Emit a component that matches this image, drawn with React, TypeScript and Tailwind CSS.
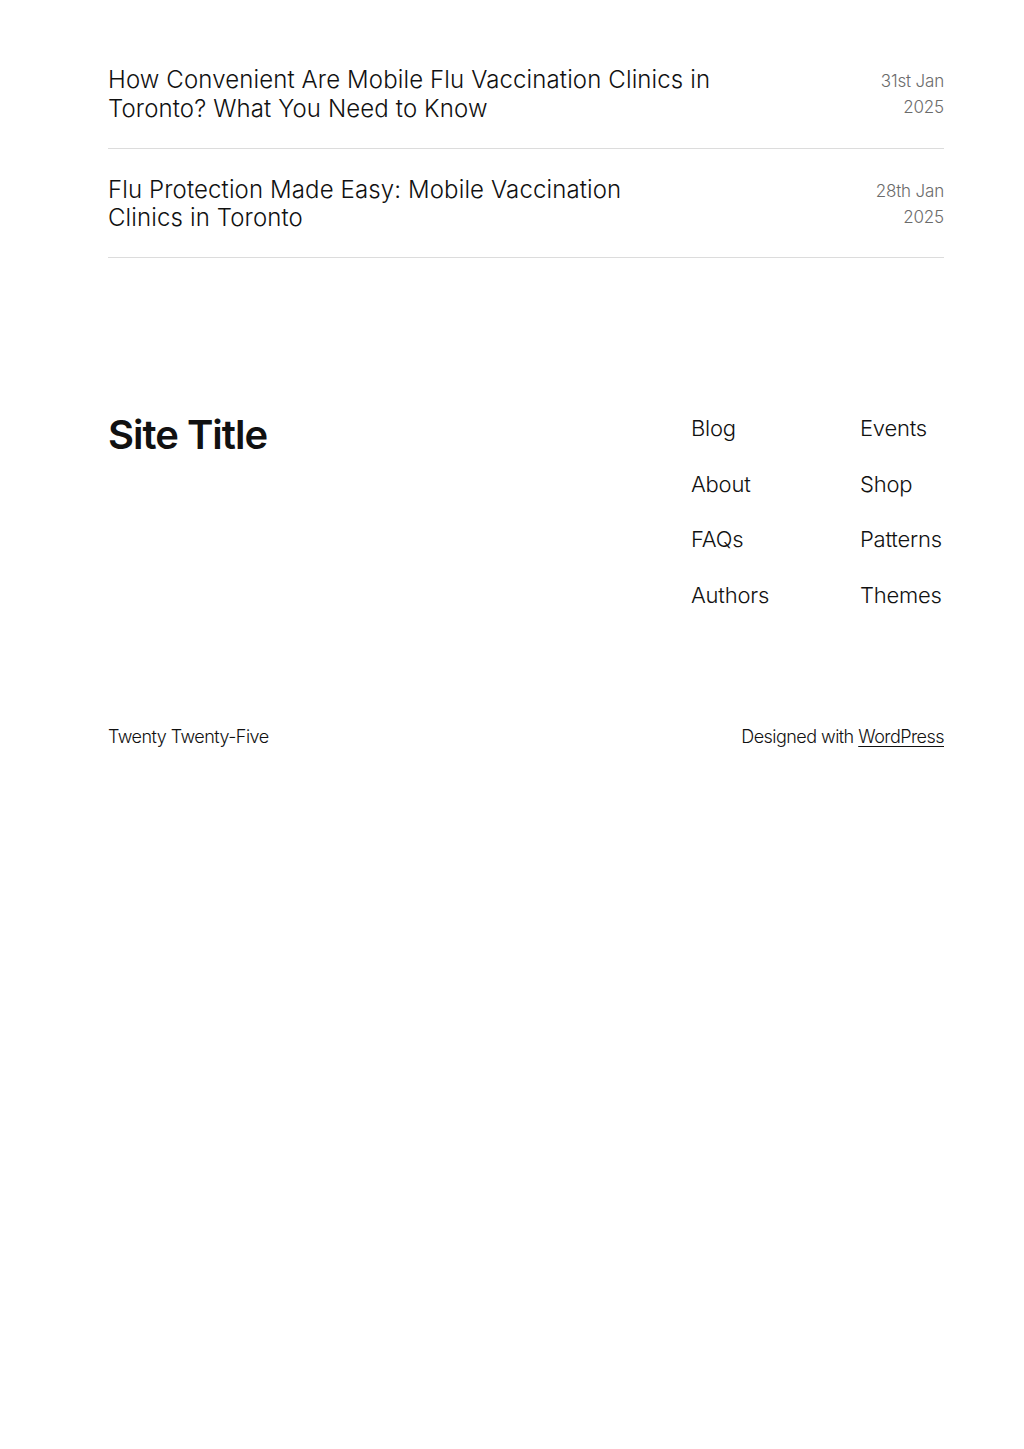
import React from "react";

const posts = [
  { title: ["How Convenient Are Mobile Flu Vaccination Clinics in", "Toronto? What You Need to Know"], date: ["31st Jan", "2025"] },
  { title: ["Flu Protection Made Easy: Mobile Vaccination", "Clinics in Toronto"], date: ["28th Jan", "2025"] },
];

const nav = [
  ["Blog", "Events"],
  ["About", "Shop"],
  ["FAQs", "Patterns"],
  ["Authors", "Themes"],
];

export default function App() {
  return (
    <div className="min-h-[1449px] bg-white text-[#111111]" style={{ fontFamily: "Inter, 'Noto Sans', sans-serif" }}>
      <div className="mx-[108px] w-[836px] pt-[39px]">
        {posts.map((p, i) => (
          <div key={i} className="flex justify-between border-b border-[#dcdcdc] pt-[27px] pb-[24px]">
            <h2 className="w-[660px] text-[24px] font-light leading-[28.8px] tracking-[0.005em]">
              {p.title[0]}
              <br />
              {p.title[1]}
            </h2>
            <div className="pt-[2px] text-right text-[17px] font-light leading-[26px] tracking-[-0.01em] text-[#6b6b6b]">
              <div>{p.date[0]}</div>
              <div>{p.date[1]}</div>
            </div>
          </div>
        ))}
      </div>

      <footer className="mx-[108px] w-[836px] pt-[154px]">
        <div className="flex justify-between">
          <div className="-mt-[1px] text-[40px] font-semibold leading-[48px] tracking-[-0.025em]">Site Title</div>
          <div className="flex w-[253px] justify-between pt-[2px]">
            {[0, 1].map((c) => (
              <div key={c} className="flex w-[84px] flex-col gap-[27px]">
                {nav.map((row) => (
                  <div key={row[c]} className="whitespace-nowrap text-[22px] font-light leading-[28.6px] tracking-[-0.01em]">
                    {row[c]}
                  </div>
                ))}
              </div>
            ))}
          </div>
        </div>
        <div className="mt-[114px] flex justify-between text-[18px] font-light leading-[26px] tracking-[-0.03em]">
          <div>Twenty Twenty-Five</div>
          <div>
            Designed with <a className="underline underline-offset-[3px]">WordPress</a>
          </div>
        </div>
      </footer>
    </div>
  );
}
